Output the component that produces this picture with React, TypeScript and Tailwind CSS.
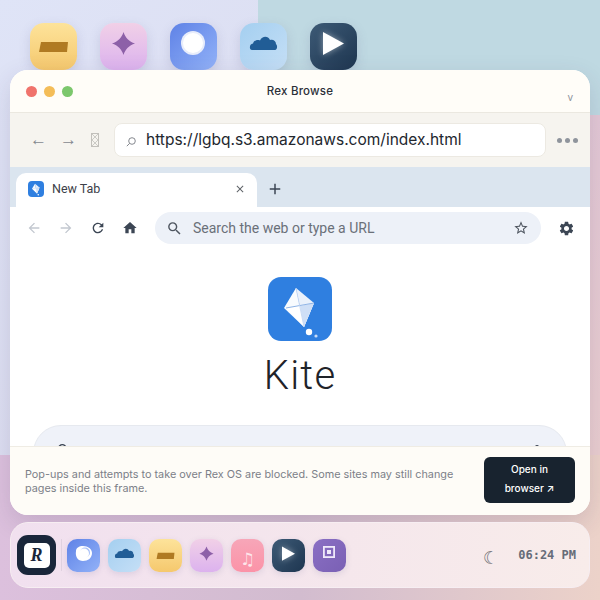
import React from 'react';
import { MdAdd, MdArrowBack, MdArrowForward, MdClose, MdHome, MdRefresh, MdSearch, MdSettings, MdStarBorder } from 'react-icons/md';

const Sheet = () => (
  <svg viewBox="0 0 47 47" className="w-full h-full">
    <polygon points="11,19 38,19 37,29 9,29" fill="#b07a22" />
  </svg>
);

const Spark = () => (
  <svg viewBox="0 0 47 47" className="w-full h-full">
    <path d="M23.5 9 C25.5 15 29 18.5 35 20.5 C29 22.5 25.5 26 23.5 32 C21.5 26 18 22.5 12 20.5 C18 18.5 21.5 15 23.5 9 Z" fill="#8d60a8" />
  </svg>
);

const Orb = () => (
  <svg viewBox="0 0 47 47" className="w-full h-full">
    <circle cx="23" cy="20" r="12" fill="#e8edfb" />
    <circle cx="23" cy="20" r="10" fill="#fff" />
  </svg>
);

// dock version has the light blue hollow pushed up to the right
const OrbDock = () => (
  <svg viewBox="0 0 33 33" className="w-full h-full">
    <path d="M9 12 C9 9 12 7 16 7 C21 7 25 10 25 14 C25 19 21 22 16 22 C11 22 8 18 9 12 Z" fill="#fff" />
    <circle cx="18" cy="13.5" r="5" fill="#a9c1f8" />
    <circle cx="17" cy="14.5" r="5" fill="#fff" />
  </svg>
);

const Cloud = () => (
  <svg viewBox="0 0 47 47" className="w-full h-full">
    <path d="M12 27 C9 27 9 21 13 20.5 C14 17 18 16.5 20 17.5 C22 13 28 12.5 30 17 C33 16 36 18 36 21 C38 23 37 27 35 27 Z" fill="#215d96" />
  </svg>
);

const Play = () => (
  <svg viewBox="0 0 47 47" className="w-full h-full drop-shadow-[0_0_3px_rgba(255,255,255,0.45)]">
    <polygon points="13,9 34,20.5 13,32" fill="#fff" />
  </svg>
);

const Frame = () => (
  <svg viewBox="0 0 33 33" className="w-full h-full">
    <rect x="10.9" y="7.9" width="10.2" height="10.2" stroke="#efe9fa" strokeWidth="1.8" fill="none" />
    <rect x="14" y="11" width="4" height="4" fill="#efe9fa" />
  </svg>
);

const Kite = ({ tiny = false }: { tiny?: boolean }) => (
  <svg viewBox="0 0 64 64" className="w-full h-full">
    <polygon points="28,11 16,31 36,50" fill="#fff" fillOpacity="0.97" />
    <polygon points="28,11 46,26 36,50" fill="#eaf1fb" />
    <polygon points="18,31 46,26 36,50" fill="#fff" />
    <polygon points="32,29 46,26 36,50" fill="#cfdff6" />
    <line x1="18" y1="31" x2="46" y2="26" stroke="#8fb4e6" strokeWidth="1" />
    <line x1="28" y1="11" x2="36" y2="50" stroke="#c3d6f2" strokeWidth="0.8" />
    <circle cx="41" cy="55" r="3.2" fill="#fff" />
    {!tiny && <circle cx="48" cy="59" r="1.6" fill="#c9dcf7" />}
  </svg>
);

const desktopIcons = [
  { key: 'sheet', cls: 'bg-gradient-to-b from-[#fde39a] to-[#f5c86d]', icon: <Sheet /> },
  { key: 'spark', cls: 'bg-gradient-to-b from-[#f1d0e7] to-[#dcb2ee]', icon: <Spark /> },
  { key: 'orb', cls: 'bg-gradient-to-br from-[#5f82e6] to-[#93b2f8]', icon: <Orb /> },
  { key: 'cloud', cls: 'bg-gradient-to-br from-[#a4cff0] to-[#c5dff6]', icon: <Cloud /> },
  { key: 'play', cls: 'bg-gradient-to-br from-[#3d5a76] to-[#1e3650]', icon: <Play /> },
];

const dockIcons = [
  { key: 'orb', cls: 'bg-gradient-to-br from-[#5f82e6] to-[#93b2f8]', icon: <OrbDock /> },
  { key: 'cloud', cls: 'bg-gradient-to-br from-[#a4cff0] to-[#c5dff6]', icon: <Cloud /> },
  { key: 'sheet', cls: 'bg-gradient-to-b from-[#fde39a] to-[#f5c86d] p-[2px]', icon: <Sheet /> },
  { key: 'spark', cls: 'bg-gradient-to-b from-[#f1d0e7] to-[#dcb2ee] p-[2px]', icon: <Spark /> },
  {
    key: 'note',
    cls: 'bg-gradient-to-b from-[#f7a6b8] to-[#fb93a8] flex items-center justify-center',
    icon: <span className="text-[17px] leading-none mt-[9px] text-white/75 font-['DejaVu_Sans',sans-serif]">♫</span>,
  },
  { key: 'play', cls: 'bg-gradient-to-br from-[#3d5a76] to-[#1e3650] p-[2px]', icon: <Play /> },
  { key: 'frame', cls: 'bg-gradient-to-br from-[#8a6fc4] to-[#7a60b4]', icon: <Frame /> },
];

export default function App() {
  return (
    <div className="relative w-[600px] h-[600px] overflow-hidden bg-gradient-to-br from-[#dfe4f7] to-[#d8d4e8] font-['Inter',sans-serif]">
      {/* backdrop panels */}
      <div className="absolute left-[258px] top-0 w-[342px] h-[115px] bg-[#bfd9e2]" />
      <div className="absolute left-0 top-[455px] w-[600px] h-[145px] bg-gradient-to-r from-[#dcc0dd] via-[#d2bccf] to-[#ecd2c9]" />
      <div className="absolute left-[590px] top-[115px] w-[10px] h-[340px] bg-gradient-to-b from-[#e3c8d6] to-[#eaced0]" />

      <div className="relative flex flex-col">
        <div className="flex gap-[23px] pl-[30px] pt-[23px] h-[70px]">
          {desktopIcons.map((item) => (
            <div key={item.key} className={`w-[47px] h-[47px] rounded-[14px] shadow-[0_4px_12px_rgba(90,90,140,0.18)] ${item.cls}`}>
              {item.icon}
            </div>
          ))}
        </div>

        <div className="ml-[10px] w-[580px] h-[445px] rounded-[18px] overflow-hidden bg-white flex flex-col shadow-[0_8px_24px_rgba(60,50,90,0.15)]">
          <div className="relative h-[43px] shrink-0 bg-[#fffdf8] border-b border-[#ebe8e0] flex items-center pl-[16px]">
            <div className="flex gap-[7px]">
              <span className="w-[11px] h-[11px] rounded-full bg-[#f0736c]" />
              <span className="w-[11px] h-[11px] rounded-full bg-[#f4bd58]" />
              <span className="w-[11px] h-[11px] rounded-full bg-[#7cc76c]" />
            </div>
            <div className="flex-1 text-center pr-[63px] pt-[2px] text-[11.5px] font-medium text-[#2b2f38] tracking-[0.02em]">Rex Browse</div>
            <span className="absolute right-[17px] top-[20px] text-[10px] text-[#8f949c]">v</span>
          </div>

          <div className="h-[54px] shrink-0 bg-[#f6f4ef] flex items-center pl-[20px] pr-[12px]">
            <span className="w-[30px] mb-[2px] text-[#85898f] text-[17px] leading-none font-['Liberation_Sans',sans-serif]">←</span>
            <span className="w-[31px] mb-[2px] text-[#85898f] text-[17px] leading-none font-['Liberation_Sans',sans-serif]">→</span>
            <svg viewBox="0 0 8 14" className="w-[8px] h-[14px] mr-[15px]">
              <rect x="0.5" y="0.5" width="7" height="13" fill="none" stroke="#c2c0bb" />
              <path d="M1 1 L7 7 L1 13 M7 1 L1 7 L7 13" fill="none" stroke="#c2c0bb" strokeWidth="0.8" />
            </svg>
            <div className="w-[432px] h-[34px] bg-white rounded-[8px] border border-[#ece9e2] flex items-center pl-[11px]">
              <svg viewBox="0 0 10 10" className="w-[10px] h-[10px] mr-[10px] mt-[4px]">
                <circle cx="6" cy="4" r="3.3" fill="none" stroke="#777b82" strokeWidth="0.9" />
                <path d="M3.6 6.4 L0.8 9.2" stroke="#777b82" strokeWidth="0.9" />
              </svg>
              <span className="text-[15.5px] text-[#23272e] whitespace-nowrap">https://lgbq.s3.amazonaws.com/index.html</span>
            </div>
            <div className="ml-auto flex gap-[3px]">
              <span className="w-[5px] h-[5px] rounded-full bg-[#8f949c]" />
              <span className="w-[5px] h-[5px] rounded-full bg-[#8f949c]" />
              <span className="w-[5px] h-[5px] rounded-full bg-[#8f949c]" />
            </div>
          </div>

          <div className="h-[40px] shrink-0 bg-[#dbe5ef] flex items-end pl-[6px] font-['Roboto',sans-serif]">
            <div className="w-[241px] h-[34px] bg-white rounded-t-[10px] flex items-center pl-[12px] pr-[11px] pb-[2px]">
              <div className="w-[16px] h-[16px] rounded-[4px] bg-[#2f7fe0] overflow-hidden"><Kite tiny /></div>
              <span className="ml-[8px] text-[12.5px] text-[#3c4048]">New Tab</span>
              <MdClose className="ml-auto w-[12px] h-[12px] text-[#5f6368]" />
            </div>
            <MdAdd className="ml-[9px] mb-[9px] w-[18px] h-[18px] text-[#3c4654]" />
          </div>

          <div className="h-[42px] shrink-0 bg-white flex items-center pl-[16px] pr-[15px] font-['Roboto',sans-serif]">
            <MdArrowBack className="w-[16px] h-[16px] text-[#c2c7cf]" />
            <MdArrowForward className="ml-[16px] w-[16px] h-[16px] text-[#c2c7cf]" />
            <MdRefresh className="ml-[16px] w-[16px] h-[16px] text-[#3c4654]" />
            <MdHome className="ml-[16px] w-[16px] h-[16px] text-[#3c4654]" />
            <div className="ml-[17px] w-[386px] h-[32px] bg-[#edf1f8] rounded-full flex items-center pl-[11px] pr-[12px]">
              <MdSearch className="w-[17px] h-[17px] text-[#4f5660]" />
              <span className="ml-[10px] text-[14px] text-[#6a7078]">Search the web or type a URL</span>
              <MdStarBorder className="ml-auto w-[16px] h-[16px] text-[#4f5660]" />
            </div>
            <MdSettings className="ml-auto w-[17px] h-[17px] text-[#3c4654]" />
          </div>

          <div className="flex-1 min-h-0 bg-white flex flex-col items-center overflow-hidden">
            <div className="mt-[28px] w-[64px] h-[64px] rounded-[13px] bg-[#2f7fe0] shrink-0"><Kite /></div>
            <div className="mt-[10px] text-[40px] leading-[50px] font-light text-[#1f2329] font-['Roboto',sans-serif] tracking-[0.03em]">Kite</div>
            <div className="mt-[24px] w-[534px] h-[60px] shrink-0 rounded-[28px] bg-[#eff2f9] border border-[#e6e9ef] flex justify-between px-[22px] pt-[16px]">
              <MdSearch className="w-[16px] h-[16px] text-[#3c4654]" />
              <span className="w-[4px] h-[4px] mt-[3px] mr-[5px] rounded-full bg-[#3c4654]" />
            </div>
          </div>

          <div className="h-[69px] shrink-0 bg-[#fefcf7] border-t border-[#efece4] flex items-center pl-[15px] pr-[15px]">
            <p className="w-[440px] text-[10.85px] leading-[14px] text-[#7c8088]">Pop-ups and attempts to take over Rex OS are blocked. Some sites may still change pages inside this frame.</p>
            <div className="ml-auto mb-[3px] w-[91px] h-[46px] rounded-[6px] bg-[#18232f] text-white text-[10px] font-medium leading-[19px] flex items-center justify-center text-center">
              <span className="mb-[2px]">Open in<br />browser ↗</span>
            </div>
          </div>
        </div>

        <div className="mt-[7px] ml-[10px] w-[580px] h-[66px] rounded-[18px] bg-gradient-to-r from-[#f1e0ef] to-[#f8ecea] border border-[#f7eef2] flex items-center pl-[6px] pr-[13px]">
          <div className="w-[39px] h-[40px] rounded-[11px] bg-[#19263a] flex items-center justify-center">
            <div className="w-[26px] h-[25px] rounded-[5px] bg-white flex items-center justify-center font-['Liberation_Serif',serif] italic font-bold text-[#19263a] text-[18px]">R</div>
          </div>
          <div className="w-px h-[32px] bg-[#e0d2e0] ml-[5px] mr-[5px]" />
          <div className="flex gap-[8px]">
            {dockIcons.map((item) => (
              <div key={item.key} className={`w-[33px] h-[33px] rounded-[10px] shadow-[0_2px_6px_rgba(90,90,140,0.15)] ${item.cls}`}>
                {item.icon}
              </div>
            ))}
          </div>
          <span className="ml-auto text-[18px] leading-none text-[#75757a] mt-[6px] font-['DejaVu_Sans',sans-serif]">☾</span>
          <span className="ml-[19px] text-[12px] font-bold text-[#666c78] font-['DejaVu_Sans_Mono',monospace]">06:24 PM</span>
        </div>
      </div>
    </div>
  );
}
